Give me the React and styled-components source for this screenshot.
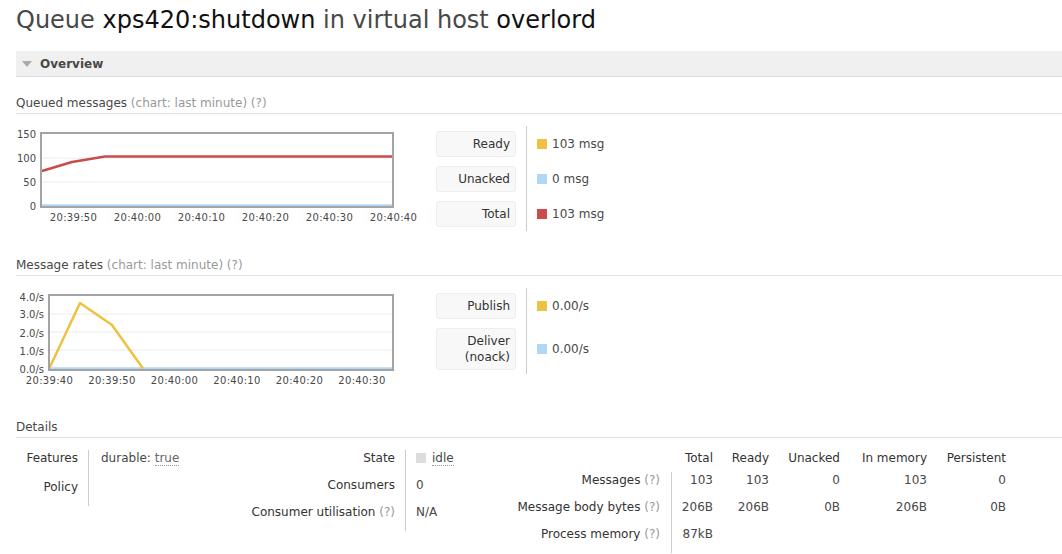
import styled, { createGlobalStyle } from 'styled-components';

const GlobalStyle = createGlobalStyle`
  body {
    margin: 0;
    background: #fff;
    color: #484848;
    font-family: "DejaVu Sans", Verdana, sans-serif;
    font-size: 12px;
  }
`;

const Page = styled.div`
  padding-left: 16px;
  overflow: hidden;
`;

const Title = styled.h1`
  margin: 6px 0 0;
  font-size: 24px;
  line-height: 28px;
  font-weight: normal;
  color: #484848;
  white-space: nowrap;

  b {
    font-weight: normal;
    color: #111;
  }
`;

const SectionBar = styled.div`
  margin-top: 17px;
  height: 25px;
  display: flex;
  align-items: center;
  gap: 8px;
  padding-left: 6px;
  background: #f0f0f0;
  border-bottom: 1px solid #ddd;
  font-weight: bold;
  color: #484848;
`;

const Triangle = styled.span`
  width: 0;
  height: 0;
  border-left: 5.5px solid transparent;
  border-right: 5.5px solid transparent;
  border-top: 6px solid #aaa;
`;

const Heading = styled.h3`
  margin: ${p => p.$top}px 0 0;
  padding-bottom: 2px;
  font-size: 12px;
  line-height: 16px;
  font-weight: normal;
  color: #484848;
  border-bottom: 1px solid #e2e2e2;
`;

const Hint = styled.span`
  color: #999;
`;

const ChartRow = styled.div`
  display: flex;
  align-items: flex-start;
  margin-top: 12px;
`;

const ChartSvg = styled.svg`
  flex: none;
  margin-right: 16px;
  overflow: visible;
  font-family: "DejaVu Sans", Verdana, sans-serif;
  font-size: 10px;
  fill: #484848;
`;

const Legend = styled.div`
  display: grid;
  grid-template-columns: 90px auto;
`;

const LegendLabel = styled.div`
  padding: 5px 10px 4px 0;
`;

const LabelBox = styled.div`
  box-sizing: border-box;
  width: 80px;
  min-height: 26px;
  padding: 4px 5px;
  line-height: 16px;
  display: flex;
  flex-direction: column;
  justify-content: center;
  text-align: right;
  color: #333;
  background: #f8f8f8;
  border: 1px solid #eee;
  border-radius: 3px;
`;

const LegendValue = styled.div`
  display: flex;
  align-items: center;
  gap: 5px;
  padding: 5px 0 4px 10px;
  border-left: 1px solid #ccc;
`;

const Swatch = styled.span`
  width: 10px;
  height: 10px;
  background: ${p => p.$color};
`;

const Details = styled.div`
  display: flex;
  align-items: flex-start;
  margin-top: 12px;
`;

const Facts = styled.div`
  display: grid;
  grid-template-columns: ${p => p.$cols};
  grid-template-rows: ${p => p.$rows};
  line-height: 16px;
`;

const Th = styled.div`
  box-sizing: border-box;
  text-align: right;
  padding-right: ${p => p.$pad || 10}px;
  color: #333;
  white-space: nowrap;
  border-right: ${p => (p.$line ? '1px solid #ccc' : 'none')};
`;

const Td = styled.div`
  padding-left: ${p => p.$pad || 0}px;
  padding-right: ${p => p.$right || 0}px;
  text-align: ${p => p.$align || 'left'};
  color: #484848;
  white-space: nowrap;
`;

const Abbr = styled.span`
  color: ${p => p.$color || '#666'};
  border-bottom: 1px dotted #999;
`;

const StateBox = styled.span`
  display: inline-block;
  width: 10px;
  height: 10px;
  margin-right: 6px;
  vertical-align: -1px;
  background: #ddd;
`;

const YELLOW = '#edc240';
const BLUE = '#afd8f8';
const RED = '#cb4b4b';

const Chart = ({ frame, yTicks, grid, xTicks, series, yLabelX, xLabelY }) => {
  const [x, y, w, h] = frame;
  return (
    <ChartSvg width={404} height={100}>
      {grid.map(g => (
        <line key={g} x1={x} x2={x + w} y1={g} y2={g} stroke="#ebebeb" strokeWidth="1" />
      ))}
      {series.map(s => (
        <polyline
          key={s.color}
          points={s.points.map(p => p.join(',')).join(' ')}
          fill="none"
          stroke={s.color}
          strokeWidth="2.5"
          strokeLinejoin="round"
        />
      ))}
      <rect x={x} y={y} width={w} height={h} fill="none" stroke="#a3a3a3" strokeWidth="2" />
      {yTicks.map(t => (
        <text key={t.label} x={yLabelX} y={t.y} textAnchor="end">{t.label}</text>
      ))}
      {xTicks.map(t => (
        <text key={t.label} x={t.x} y={xLabelY} textAnchor="middle" letterSpacing="0.3">{t.label}</text>
      ))}
    </ChartSvg>
  );
};

const LegendItem = ({ label, color, value }) => (
  <>
    <LegendLabel><LabelBox>{label}</LabelBox></LegendLabel>
    <LegendValue><Swatch $color={color} />{value}</LegendValue>
  </>
);

export default function App() {
  return (
    <Page>
      <GlobalStyle />
      <Title>Queue <b>xps420:shutdown</b> in virtual host <b>overlord</b></Title>

      <SectionBar><Triangle />Overview</SectionBar>

      <Heading $top={18}>Queued messages <Hint>(chart: last minute) (?)</Hint></Heading>
      <ChartRow>
        <Chart
          frame={[25, 7, 352, 74]}
          grid={[32, 56]}
          yLabelX={20}
          xLabelY={95}
          yTicks={[
            { label: '150', y: 12 },
            { label: '100', y: 36 },
            { label: '50', y: 60 },
            { label: '0', y: 84 },
          ]}
          xTicks={['20:39:50', '20:40:00', '20:40:10', '20:40:20', '20:40:30', '20:40:40'].map((label, i) => ({ label, x: 57.5 + i * 64 }))}
          series={[
            { color: BLUE, points: [[26, 79.5], [376, 79.5]] },
            { color: RED, points: [[26, 45], [56, 36], [89, 30.5], [376, 30.5]] },
          ]}
        />
        <Legend>
          <LegendItem label="Ready" color={YELLOW} value="103 msg" />
          <LegendItem label="Unacked" color={BLUE} value="0 msg" />
          <LegendItem label="Total" color={RED} value="103 msg" />
        </Legend>
      </ChartRow>

      <Heading $top={26}>Message rates <Hint>(chart: last minute) (?)</Hint></Heading>
      <ChartRow>
        <Chart
          frame={[33, 7, 344, 75]}
          grid={[26, 44, 62]}
          yLabelX={28}
          xLabelY={96}
          yTicks={[
            { label: '4.0/s', y: 13 },
            { label: '3.0/s', y: 30 },
            { label: '2.0/s', y: 49 },
            { label: '1.0/s', y: 67 },
            { label: '0.0/s', y: 85 },
          ]}
          xTicks={['20:39:40', '20:39:50', '20:40:00', '20:40:10', '20:40:20', '20:40:30'].map((label, i) => ({ label, x: 33.5 + i * 62.5 }))}
          series={[
            { color: BLUE, points: [[34, 80.5], [376, 80.5]] },
            { color: YELLOW, points: [[33, 81], [64, 15], [96, 37], [127, 80.5]] },
          ]}
        />
        <Legend>
          <LegendItem label="Publish" color={YELLOW} value="0.00/s" />
          <LegendItem label={<><span>Deliver</span><span>(noack)</span></>} color={BLUE} value="0.00/s" />
        </Legend>
      </ChartRow>

      <Heading $top={31}>Details</Heading>
      <Details>
        <Facts $cols="73px 151px" $rows="29px 27px">
          <Th $line>Features</Th>
          <Td $pad={12}>durable: <Abbr>true</Abbr></Td>
          <Th $line>Policy</Th>
          <Td />
        </Facts>

        <Facts $cols="166px 104px" $rows="27px 27px 27px">
          <Th $line>State</Th>
          <Td $pad={10}><StateBox /><Abbr $color="#484848">idle</Abbr></Td>
          <Th $line>Consumers</Th>
          <Td $pad={10}>0</Td>
          <Th $line>Consumer utilisation <Hint>(?)</Hint></Th>
          <Td $pad={10}>N/A</Td>
        </Facts>

        <Facts $cols="162px 51px 56px 71px 87px 79px" $rows="22px 27px 27px 27px">
          <Th />
          <Th>Total</Th>
          <Th>Ready</Th>
          <Th>Unacked</Th>
          <Th>In memory</Th>
          <Th>Persistent</Th>

          <Th $line $pad={11}>Messages <Hint>(?)</Hint></Th>
          <Td $align="right" $right={10}>103</Td>
          <Td $align="right" $right={10}>103</Td>
          <Td $align="right" $right={10}>0</Td>
          <Td $align="right" $right={10}>103</Td>
          <Td $align="right" $right={10}>0</Td>

          <Th $line $pad={11}>Message body bytes <Hint>(?)</Hint></Th>
          <Td $align="right" $right={10}>206B</Td>
          <Td $align="right" $right={10}>206B</Td>
          <Td $align="right" $right={10}>0B</Td>
          <Td $align="right" $right={10}>206B</Td>
          <Td $align="right" $right={10}>0B</Td>

          <Th $line $pad={11}>Process memory <Hint>(?)</Hint></Th>
          <Td $align="right" $right={10}>87kB</Td>
          <Td />
          <Td />
          <Td />
          <Td />
        </Facts>
      </Details>
    </Page>
  );
}
